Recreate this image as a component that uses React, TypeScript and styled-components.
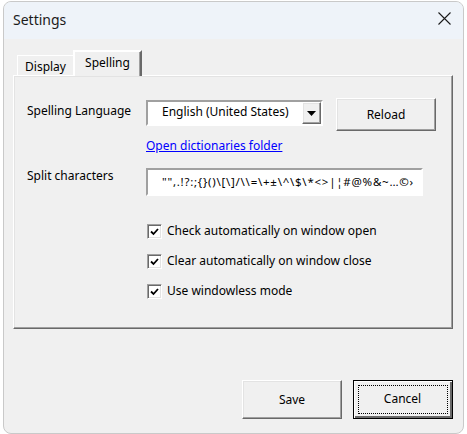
import React from "react";
import styled, { createGlobalStyle, css } from "styled-components";

const Global = createGlobalStyle`
  html, body { margin: 0; padding: 0; background: #ffffff; }
  body { font-family: "Noto Sans", "Liberation Sans", sans-serif; font-size: 12px; line-height: 16px; }
  * { box-sizing: border-box; }
`;

const Page = styled.div`
  width: 467px;
  height: 434px;
  padding: 1px 4px 0 3px;
`;

const Window = styled.div`
  width: 461px;
  height: 433px;
  border: 1px solid #c9c9c9;
  border-radius: 8px;
  overflow: hidden;
  display: flex;
  flex-direction: column;
  background: #f0f0f0;
`;

const TitleBar = styled.div`
  height: 37px;
  flex: none;
  background: #eef3f9;
  display: flex;
  align-items: center;
  justify-content: space-between;
  padding: 0 12px 0 9px;
`;

const Title = styled.span`
  font-family: "Noto Sans", sans-serif;
  font-size: 14px;
  color: #1b1b1b;
  margin-top: -2px;
`;

const CloseBtn = styled.div`
  width: 14px;
  height: 14px;
  display: flex;
  align-items: center;
  justify-content: center;
  margin-top: -4px;
`;

const Body = styled.div`
  flex: 1;
  display: flex;
  flex-direction: column;
  padding: 11px 10px 14px 9px;
`;

const TabRow = styled.div`
  display: flex;
  align-items: flex-end;
  padding-left: 4px;
  height: 26px;
  position: relative;
  z-index: 1;
  margin-bottom: -1px;
`;

const Tab = styled.div<{ $active?: boolean }>`
  font-size: 12px;
  color: #000;
  display: flex;
  justify-content: center;
  background: #f0f0f0;
  border-top: 1px solid #ffffff;
  border-left: 1px solid #ffffff;
  border-right: 1px solid #696969;
  ${(p) =>
    p.$active
      ? css`
          width: 69px;
          height: 26px;
          padding-top: 3px;
          box-shadow: inset -1px 0 0 #a0a0a0;
          border-top: 2px solid #ffffff;
          border-left: 2px solid #ffffff;
          border-right: 2px solid #696969;
        `
      : css`
          width: 56px;
          height: 21px;
          padding-top: 3px;
          margin-top: 4px;
          border-right: none;
          border-bottom: 1px solid #ffffff;
        `}
`;

const Panel = styled.div`
  width: 440px;
  height: 254px;
  border-top: 1px solid #ffffff;
  border-left: 1px solid #ffffff;
  border-right: 1px solid #696969;
  border-bottom: 1px solid #696969;
  box-shadow: inset -1px -1px 0 #a0a0a0, inset 1px 1px 0 #e3e3e3;
  padding: 22px 0 0 13px;
  display: flex;
  flex-direction: column;
`;

const FormGrid = styled.div`
  display: grid;
  grid-template-columns: 119px auto;
  align-items: start;
`;

const Label = styled.div<{ $top: number }>`
  font-size: 12px;
  line-height: 16px;
  color: #000;
  padding-top: ${(p) => p.$top}px;
`;

const LangRow = styled.div`
  display: flex;
  align-items: flex-start;
  gap: 13px;
`;

const sunken = css`
  border-top: 2px solid #a0a0a0;
  border-left: 2px solid #a0a0a0;
  border-right: 2px solid #ffffff;
  border-bottom: 2px solid #ffffff;
  background: #ffffff;
`;

const raised = css`
  background: #f0f0f0;
  border-top: 1px solid #ffffff;
  border-left: 1px solid #ffffff;
  border-right: 1px solid #696969;
  border-bottom: 1px solid #696969;
  box-shadow: inset -1px -1px 0 #a0a0a0, inset 1px 1px 0 #e3e3e3;
`;

const Combo = styled.div`
  ${sunken}
  margin-top: 2px;
  width: 177px;
  height: 26px;
  display: flex;
  align-items: center;
  justify-content: space-between;
  padding-left: 14px;
`;

const ComboText = styled.span`
  font-size: 12px;
  color: #000;
  margin-top: -3px;
`;

const ArrowBtn = styled.div`
  ${raised}
  width: 19px;
  height: 22px;
  display: flex;
  align-items: center;
  justify-content: center;
`;

const PushButton = styled.div<{ $w: number; $h: number; $default?: boolean }>`
  ${raised}
  width: ${(p) => p.$w}px;
  height: ${(p) => p.$h}px;
  font-size: 12px;
  color: #000;
  display: flex;
  align-items: center;
  justify-content: center;
  ${(p) =>
    p.$default &&
    css`
      border: 1px solid #000;
      box-shadow: inset 1px 1px 0 #fff, inset -2px -2px 0 #696969;
    `}
`;

const FocusRect = styled.span`
  border: 1px dotted #000;
  width: calc(100% - 8px);
  height: calc(100% - 8px);
  display: flex;
  align-items: center;
  justify-content: center;
  margin-top: -1px;
  margin-left: -1px;
`;

const Link = styled.a`
  grid-column: 2;
  font-size: 12px;
  color: #0000ff;
  text-decoration: underline;
  margin-top: 7px;
  line-height: 16px;
  cursor: pointer;
`;

const TextField = styled.div`
  ${sunken}
  width: 277px;
  height: 28px;
  margin-top: 14px;
  padding-left: 14px;
  overflow: hidden;
  white-space: nowrap;
  font-size: 11.5px;
  letter-spacing: 0.75px;
  color: #000;
  display: flex;
  align-items: center;
`;

const CheckList = styled.div`
  display: flex;
  flex-direction: column;
  gap: 15px;
  padding-left: 120px;
  margin-top: 28px;
`;

const CheckRow = styled.div`
  display: flex;
  align-items: center;
  gap: 5px;
  height: 15px;
`;

const Box = styled.span`
  width: 15px;
  height: 15px;
  flex: none;
  background: #fff;
  border-top: 1px solid #a0a0a0;
  border-left: 1px solid #a0a0a0;
  border-right: 1px solid #ffffff;
  border-bottom: 1px solid #ffffff;
  box-shadow: inset 1px 1px 0 #696969, inset -1px -1px 0 #e3e3e3;
  display: flex;
  align-items: center;
  justify-content: center;
`;

const CheckText = styled.span`
  font-size: 12px;
  color: #000;
  margin-top: -1px;
`;

const Footer = styled.div`
  margin-top: auto;
  display: flex;
  justify-content: flex-end;
  gap: 11px;
`;

const checks = [
  "Check automatically on window open",
  "Clear automatically on window close",
  "Use windowless mode",
];

export default function App() {
  return (
    <Page>
      <Global />
      <Window>
        <TitleBar>
          <Title>Settings</Title>
          <CloseBtn>
            <svg width="13" height="13" viewBox="0 0 13 13">
              <path d="M0.5 0.5 L12.5 12.5 M12.5 0.5 L0.5 12.5" stroke="#1b1b1b" strokeWidth="1.1" />
            </svg>
          </CloseBtn>
        </TitleBar>
        <Body>
          <TabRow>
            <Tab>Display</Tab>
            <Tab $active>Spelling</Tab>
          </TabRow>
          <Panel>
            <FormGrid>
              <Label $top={5}>Spelling Language</Label>
              <LangRow>
                <Combo>
                  <ComboText>English (United States)</ComboText>
                  <ArrowBtn>
                    <svg width="9" height="5" viewBox="0 0 9 5">
                      <path d="M0 0 H9 L4.5 5 Z" fill="#000" />
                    </svg>
                  </ArrowBtn>
                </Combo>
                <PushButton $w={100} $h={33}>Reload</PushButton>
              </LangRow>
              <Link>Open dictionaries folder</Link>
              <Label $top={14}>Split characters</Label>
              <TextField>{'"",.!?:;{}()\\[\\]/\\\\=\\+±\\^\\$\\*<>|¦#@%&~…©›'}</TextField>
            </FormGrid>
            <CheckList>
              {checks.map((c) => (
                <CheckRow key={c}>
                  <Box>
                    <svg width="9" height="8" viewBox="0 0 9 8">
                      <path d="M1 3.5 L3.5 6 L8 1" stroke="#000" strokeWidth="1.8" fill="none" />
                    </svg>
                  </Box>
                  <CheckText>{c}</CheckText>
                </CheckRow>
              ))}
            </CheckList>
          </Panel>
          <Footer>
            <PushButton $w={100} $h={39}>Save</PushButton>
            <PushButton $w={100} $h={39} $default>
              <FocusRect>Cancel</FocusRect>
            </PushButton>
          </Footer>
        </Body>
      </Window>
    </Page>
  );
}
